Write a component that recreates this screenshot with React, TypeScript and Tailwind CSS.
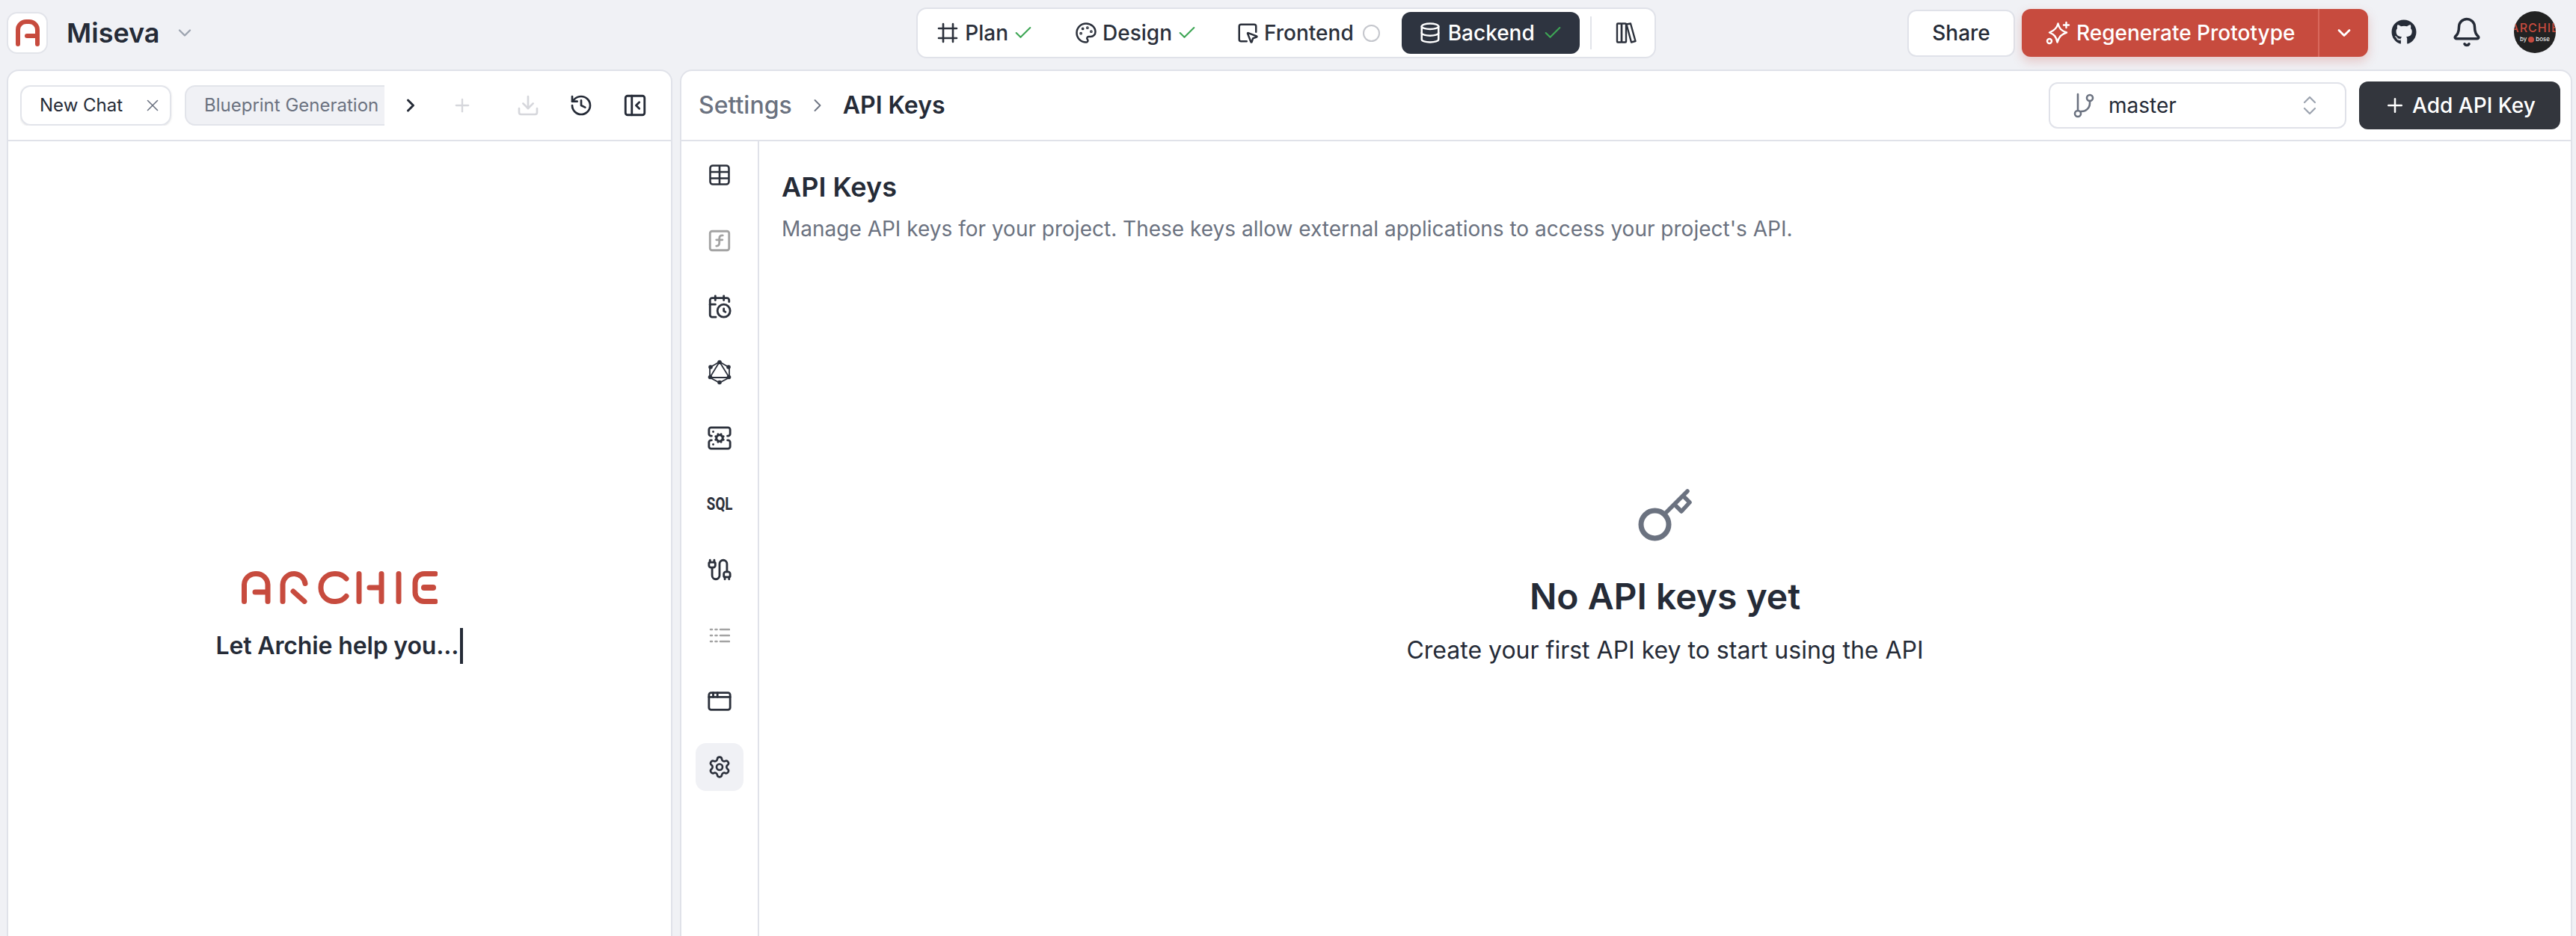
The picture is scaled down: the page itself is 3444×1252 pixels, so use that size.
import {
  AppWindow,
  Bell,
  CalendarClock,
  Cable,
  Check,
  ChevronDown,
  ChevronRight,
  Database,
  Download,
  History,
  Palette,
  PanelLeftClose,
  Plus,
  ServerCog,
  Settings,
  SquareFunction,
  SquareMousePointer,
  X,
} from "lucide-react";
import { FaGithub } from "react-icons/fa";

function PlanIcon() {
  return (
    <svg width="28" height="28" viewBox="0 0 28 28" fill="none" stroke="currentColor" strokeWidth="2.6" strokeLinecap="round">
      <path d="M8 2v24M21 2v24M2 8h24M2 21h24" />
    </svg>
  );
}

function LibraryIcon() {
  return (
    <svg width="28" height="30" viewBox="0 0 28 30" fill="none" stroke="#2b303b" strokeWidth="2.4" strokeLinejoin="round">
      <rect x="2" y="2.500" width="6" height="25" rx="1" />
      <rect x="8" y="2.500" width="6" height="25" rx="1" />
      <path d="M14.500 3.500 20 2.500 26.500 26 21 27.500Z" />
    </svg>
  );
}

function GraphqlIcon() {
  return (
    <svg width="32" height="34" viewBox="0 0 32 34" fill="none" stroke="#2b303b" strokeWidth="1.8">
      <path d="M16 3 29 10.500V24L16 31 3 24V10.500Z" />
      <path d="M16 3 29 24H3Z" />
      <g fill="#2b303b" stroke="none">
        <circle cx="16" cy="3.500" r="2.800" />
        <circle cx="28" cy="10" r="2.800" />
        <circle cx="28.500" cy="23.500" r="2.800" />
        <circle cx="16" cy="30.500" r="2.800" />
        <circle cx="3.500" cy="23.500" r="2.800" />
        <circle cx="4" cy="10" r="2.800" />
      </g>
    </svg>
  );
}

function TableIcon() {
  return (
    <svg width="28" height="28" viewBox="0 0 28 28" fill="none" stroke="#2b303b" strokeWidth="2.600" strokeLinejoin="round">
      <rect x="1.500" y="1.500" width="25" height="25" rx="3.500" />
      <path d="M1.500 10h25M1.500 18.500h25M14 1.500v25" />
    </svg>
  );
}

function DashedList() {
  return (
    <svg width="28" height="22" viewBox="0 0 28 22" fill="none" stroke="#a3a3a3" strokeWidth="2.600" strokeLinecap="round">
      <path d="M2 3h2M8.500 3h2M15 3h12M2 11h2M8.500 11h2M15 11h12M2 19h2M8.500 19h2M15 19h12" />
    </svg>
  );
}

function BranchIcon() {
  return (
    <svg width="30" height="34" viewBox="0 0 30 34" fill="none" stroke="#6b7280" strokeWidth="2.600" strokeLinecap="round">
      <path d="M7 2v22" />
      <circle cx="7" cy="28" r="4" />
      <circle cx="23" cy="7" r="4" />
      <path d="M23 11v3a11 11 0 0 1-12 11" />
    </svg>
  );
}

function UpDownIcon() {
  return (
    <svg width="18" height="26" viewBox="0 0 18 26" fill="none" stroke="#9ca3af" strokeWidth="2.200" strokeLinecap="round" strokeLinejoin="round">
      <path d="M2 9 9 2l7 7M2 17l7 7 7-7" />
    </svg>
  );
}

function SparkleIcon() {
  return (
    <svg width="34" height="32" viewBox="0 0 34 32" fill="none" stroke="currentColor" strokeWidth="2.400" strokeLinecap="round" strokeLinejoin="round">
      <path d="M16.500 3.500C18 10 20.500 13 28 15.500 20.500 18 18 21 15.500 28.500 14 21 11.500 18 5 15.500 11.500 13 15 10 16.500 3.500Z" />
      <path d="M27.500 2v7M24 5.500h7" />
      <circle cx="5" cy="27" r="3" />
    </svg>
  );
}

function KeyIcon() {
  return (
    <svg width="72" height="70" viewBox="0 0 72 70" fill="none" stroke="#6b7280" strokeLinecap="round" strokeLinejoin="round">
      <circle cx="22.500" cy="47.500" r="18.500" strokeWidth="7" />
      <path d="M36 33 66 3" strokeWidth="5.500" />
      <path d="M61 10 69 18 58 30 49 21" strokeWidth="5.500" />
    </svg>
  );
}

function ArchieMark() {
  return (
    <svg width="32" height="36" viewBox="0 0 32 36" fill="none" stroke="#c74b3e" strokeWidth="6" strokeLinecap="round">
      <path d="M3 33V14A11 11 0 0 1 14 3h4a11 11 0 0 1 11 11v19" />
      <path d="M15 22h14" />
    </svg>
  );
}

function ArchieLogo() {
  return (
    <svg width="262" height="44" viewBox="0 0 262 44" fill="none" stroke="#c74b3e" strokeWidth="7" strokeLinecap="round" strokeLinejoin="round">
      <path d="M3.500 40.500V18A15 15 0 0 1 18 3.500h2A15 15 0 0 1 35 18v22.500M35 28H18" />
      <path d="M55 40.500V18A15 15 0 0 1 70 3.500h1a15 15 0 0 1 14 13M69 27l15 13.500" />
      <path d="M140 10A19 19 0 0 0 126 3.500h-2A18 18 0 0 0 106 21v2a18 18 0 0 0 18 17.500h2a19 19 0 0 0 14-7" />
      <path d="M157 3.500v37M187 3.500v37M171 22h16" />
      <path d="M210 3.500v37" />
      <path d="M259 3.500h-15a12 12 0 0 0-12 12v13a12 12 0 0 0 12 12h15" />
      <path d="M244 22h12" strokeWidth="8" />
    </svg>
  );
}

const nav = [
  { name: "Plan", icon: <PlanIcon />, gap: "ml-[9px]", after: "mr-[55px]", done: true },
  { name: "Design", icon: <Palette size={30} strokeWidth={2} />, gap: "ml-[7px]", after: "mr-[52px]", done: true },
  { name: "Frontend", icon: <SquareMousePointer size={30} strokeWidth={2} />, gap: "ml-[7px]", after: "mr-0", done: false },
];

const sideItems = [
  { icon: <TableIcon /> },
  { icon: <SquareFunction size={34} strokeWidth={2} color="#a3a3a3" /> },
  { icon: <CalendarClock size={34} strokeWidth={2} color="#2b303b" /> },
  { icon: <GraphqlIcon /> },
  { icon: <ServerCog size={34} strokeWidth={2} color="#2b303b" /> },
  { icon: <span className="text-[24px] font-bold leading-none text-[#2b303b] font-['Roboto',sans-serif] scale-x-[0.78] inline-block">SQL</span> },
  { icon: <Cable size={34} strokeWidth={2} color="#2b303b" /> },
  { icon: <DashedList /> },
  { icon: <AppWindow size={34} strokeWidth={2} color="#2b303b" /> },
  { icon: <Settings size={32} strokeWidth={2} color="#2b303b" />, active: true },
];

export default function App() {
  return (
    <div className="w-full h-[1252px] overflow-hidden bg-[#f0f1f5] font-['Inter',sans-serif] text-[#252b37]">
      {/* top bar */}
      <div className="h-[93px] flex items-start pt-[10px]">
        <div className="flex-1 flex items-center pl-[9px] pt-[6px]">
          <div className="w-[55px] h-[56px] rounded-[14px] bg-white border-2 border-[#e2e4ea] flex items-center justify-center">
            <ArchieMark />
          </div>
          <span className="ml-[25px] text-[36px] leading-[44px] font-semibold">Miseva</span>
          <ChevronDown size={28} strokeWidth={2} color="#9ca3af" className="ml-[19px]" />
        </div>

        <div className="ml-[13px] h-[68px] rounded-[14px] bg-white border-2 border-[#e0e2e9] flex items-center pl-[26px] pr-[24px]">
          {nav.map((n) => (
            <div key={n.name} className={`flex items-center ${n.after}`}>
              <span className="text-[#2b303b]">{n.icon}</span>
              <span className={`${n.gap} text-[28px] font-medium text-[#2b303b]`}>{n.name}</span>
              {n.done ? (
                <Check size={28} strokeWidth={1.8} color="#3ea655" className="ml-[6px]" />
              ) : (
                <span className="ml-[12px] w-[23px] h-[23px] rounded-full border-2 border-[#c4c6cc]" />
              )}
            </div>
          ))}
          <div className="h-[56px] ml-[29px] pl-[23px] pr-[22px] rounded-[12px] bg-[#2e3440] flex items-center text-white">
            <Database size={30} strokeWidth={2} />
            <span className="ml-[9px] text-[28px] font-medium">Backend</span>
            <Check size={28} strokeWidth={1.8} color="#3ea655" className="ml-[10px]" />
          </div>
          <div className="w-[2px] h-[44px] bg-[#e2e4ea] ml-[14px]" />
          <span className="ml-[32px]">
            <LibraryIcon />
          </span>
        </div>

        <div className="flex-1 flex items-center justify-end pr-[27px]">
          <div className="w-[144px] h-[63px] rounded-[12px] bg-white border-2 border-[#e0e2e9] flex items-center justify-center text-[28px] font-medium mt-[2px]">
            Share
          </div>
          <div className="ml-[9px] h-[64px] rounded-[12px] bg-[#c74b3e] text-white flex items-center shadow-[0_6px_14px_rgba(199,75,62,0.25)] mt-[2px]">
            <div className="w-[398px] flex items-center pl-[32px] border-r-2 border-[#d9695d] h-full">
              <SparkleIcon />
              <span className="ml-[7px] text-[28px] font-medium">Regenerate Prototype</span>
            </div>
            <div className="w-[65px] flex justify-center">
              <ChevronDown size={28} strokeWidth={2.4} />
            </div>
          </div>
          <FaGithub size={34} className="ml-[31px] text-[#252b37]" />
          <Bell size={42} strokeWidth={2} color="#252b37" className="ml-[46px]" />
          <div className="ml-[42px] w-[56px] h-[56px] rounded-full bg-[#222] overflow-hidden flex flex-col items-center justify-center">
            <span className="text-[16px] font-medium leading-[16px] tracking-[1px] text-[#c74b3e] whitespace-nowrap shrink-0">ARCHIE</span>
            <span className="mt-[3px] text-[8px] leading-[9px] text-white whitespace-nowrap flex items-center gap-[2px] shrink-0">
              by <span className="w-[8px] h-[8px] rounded-full bg-[#c74b3e]" /> bose
            </span>
          </div>
        </div>
      </div>

      {/* panels */}
      <div className="flex pl-[9px] pr-[5px] gap-[10px] h-[1300px]">
        <div className="w-[890px] h-full rounded-t-[16px] border-2 border-[#e0e2e9] bg-white">
          <div className="h-[94px] border-b-2 border-[#e0e2e9] flex items-center pl-[16px]">
            <div className="w-[487px] overflow-hidden flex items-center gap-[18px] shrink-0">
              <div className="h-[54px] w-[202px] shrink-0 rounded-[14px] border-2 border-[#e2e4ea] shadow-sm flex items-center pl-[24px]">
                <span className="text-[24px] font-normal">New Chat</span>
                <X size={26} strokeWidth={1.500} color="#6b7280" className="ml-[27px]" />
              </div>
              <div className="h-[54px] w-[320px] shrink-0 rounded-[14px] border-2 border-[#e2e4ea] bg-[#f0f1f5] flex items-center pl-[24px]">
                <span className="text-[24px] font-normal text-[#6b7280] whitespace-nowrap">Blueprint Generation</span>
              </div>
            </div>
            <ChevronRight size={28} strokeWidth={2.600} color="#252b37" className="ml-[21px]" />
            <Plus size={28} strokeWidth={2} color="#d6d7dc" className="ml-[41px]" />
            <Download size={32} strokeWidth={2} color="#d6d7dc" className="ml-[58px]" />
            <History size={32} strokeWidth={2} color="#252b37" className="ml-[39px]" />
            <PanelLeftClose size={34} strokeWidth={2} color="#252b37" className="ml-[39px]" />
          </div>
          <div className="flex flex-col items-center pt-[575px]">
            <ArchieLogo />
            <div className="mt-[32px] flex items-center">
              <span className="text-[32px] font-semibold tracking-[-0.15px] leading-[48px]">Let Archie help you...</span>
              <span className="w-[4px] h-[48px] bg-[#252b37] ml-[2px]" />
            </div>
          </div>
        </div>

        <div className="flex-1 h-full rounded-t-[16px] border-2 border-[#e0e2e9] bg-white">
          <div className="h-[94px] border-b-2 border-[#e0e2e9] flex items-center pl-[23px] pr-[14px]">
            <span className="text-[32px] font-medium text-[#6b7280]">Settings</span>
            <ChevronRight size={28} strokeWidth={1.600} color="#6b7280" className="mx-[20px]" />
            <span className="text-[32px] font-semibold">API Keys</span>
            <div className="ml-auto w-[398px] h-[62px] rounded-[12px] border-2 border-[#e0e2e9] flex items-center pl-[30px] pr-[38px]">
              <BranchIcon />
              <span className="ml-[18px] text-[28px]">master</span>
              <span className="ml-auto">
                <UpDownIcon />
              </span>
            </div>
            <div className="ml-[17px] w-[269px] h-[64px] rounded-[12px] bg-[#33363d] text-white flex items-center justify-center">
              <Plus size={30} strokeWidth={2} />
              <span className="ml-[8px] text-[28px] font-medium">Add API Key</span>
            </div>
          </div>

          <div className="flex h-full">
            <div className="w-[104px] shrink-0 border-r-2 border-[#e0e2e9] h-full flex flex-col items-center pt-[13px] gap-[24px]">
              {sideItems.map((s, i) => (
                <div
                  key={i}
                  className={s.active ? "w-[64px] h-[64px] rounded-[14px] bg-[#f0f1f5] flex items-center justify-center" : "w-[64px] h-[64px] rounded-[14px] flex items-center justify-center"}
                >
                  {s.icon}
                </div>
              ))}
            </div>
            <div className="flex-1">
              <div className="pl-[30px] pt-[39px]">
                <h2 className="text-[36px] leading-[44px] font-semibold">API Keys</h2>
                <p className="mt-[16px] text-[28px] leading-[36px] text-[#6b7280]">
                  Manage API keys for your project. These keys allow external applications to access your project's API.
                </p>
              </div>
              <div className="flex flex-col items-center pt-[330px]">
                <KeyIcon />
                <h3 className="mt-[44px] text-[48px] leading-[60px] font-semibold">No API keys yet</h3>
                <p className="mt-[20px] text-[32px] leading-[44px]">Create your first API key to start using the API</p>
              </div>
            </div>
          </div>
        </div>
      </div>
    </div>
  );
}
